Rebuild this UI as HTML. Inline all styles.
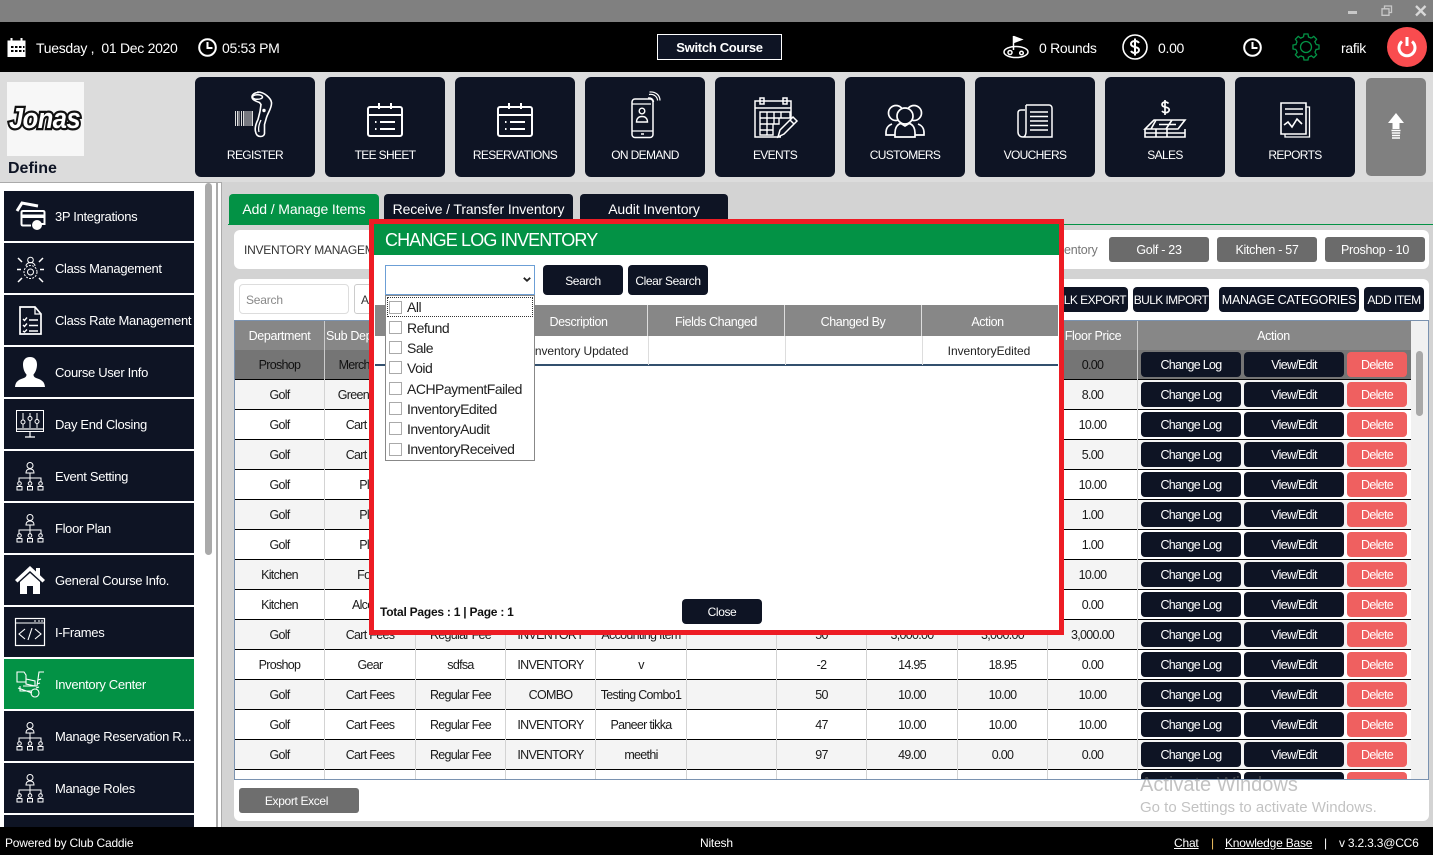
<!DOCTYPE html>
<html><head><meta charset="utf-8">
<style>
*{box-sizing:border-box}
html,body{margin:0;padding:0;width:1433px;height:855px;overflow:hidden;background:#d3d3d3;font-family:"Liberation Sans",sans-serif}
.a{position:absolute}
svg{position:absolute;overflow:visible;fill:none;stroke:#fff}
.t{color:#fff;font-size:14px;letter-spacing:-.3px;white-space:nowrap;position:absolute}
.tile{position:absolute;top:77px;width:120px;height:100px;background:#0e1424;border-radius:6px;color:#fff;font-size:12px;letter-spacing:-.65px;text-align:center;padding-top:71px}
.side{position:absolute;left:4px;width:190px;height:50px;background:#0e1424;color:#fff;font-size:13px;letter-spacing:-.33px;line-height:52px;padding-left:51px;white-space:nowrap}
.btn{position:absolute;background:#0e1424;color:#fff;border-radius:4px;text-align:center;font-size:12px;letter-spacing:-.4px;white-space:nowrap}
.g{position:absolute;top:237px;width:100px;height:25px;line-height:27px;background:#6b6b6b;color:#fff;border-radius:3px;text-align:center;font-size:12.5px;letter-spacing:-.3px}
.r{position:absolute;left:235px;width:1176px;height:30px;border-bottom:1px solid #000;display:flex;font-size:12.5px;letter-spacing:-.7px;color:#1a1a1a;line-height:31px;background:#fff}
.r.o{background:#f4f4f4}
.r span{display:block;height:30px;text-align:center;border-right:1px solid #d3d3d3;white-space:nowrap;overflow:hidden;flex:none}
.w0{width:90px}.w1{width:91px}.wa{width:273px}
.r b{position:absolute;top:2px;height:25px;line-height:27px;background:#0e1424;color:#fff;font-weight:normal;border-radius:4px;text-align:center}
.r b.c{left:906px;width:100px}.r b.v{left:1009px;width:100px}.r b.d{left:1112px;width:60px;background:#ef6060}
.it{position:absolute;left:407px;font-size:14px;letter-spacing:-.5px;color:#222;line-height:18px;white-space:nowrap}
.cb{position:absolute;left:389px;width:13px;height:13px;border:1px solid #aaa;background:#fff}
.mh{position:absolute;top:305px;height:31px;line-height:34px;text-align:center;color:#fff;font-size:12.5px;letter-spacing:-.4px;border-right:1px solid #ddd}
.tab{position:absolute;top:194px;height:31px;background:#0e1424;color:#fff;border-radius:4px 4px 0 0;font-size:14px;letter-spacing:-.12px;text-align:center;line-height:31px;white-space:nowrap}
</style></head>
<body>
<svg width="0" height="0" style="position:absolute"><defs>
<symbol id="org" viewBox="0 0 28 28" overflow="visible"><g fill="none" stroke="#fff" stroke-width="1"><circle cx="14" cy="3.5" r="3"/><path d="M10 11c0-3 1.500-4 4-4s4 1 4 4zM14 11v5M3 20v-4h22v4M14 16v4"/><circle cx="3.500" cy="21.500" r="1.800"/><path d="M1 28v-3.500h5V28zM11.500 28v-3.500h5V28zM22 28v-3.500h5V28z"/><circle cx="14" cy="21.500" r="1.800"/><circle cx="24.500" cy="21.500" r="1.800"/></g></symbol>
<symbol id="cal" viewBox="0 0 36 34" overflow="visible"><g fill="none" stroke="#fff" stroke-width="2"><rect x="1" y="4" width="34" height="29" rx="2"/><path d="M1 12h34M12 0v6M24 0v6M8 19h1.500M13 19h15M8 26h1.500M13 26h15"/></g></symbol>
</defs></svg>

<!-- title bar -->
<div class="a" style="left:0;top:0;width:1433px;height:22px;background:#808080"></div>
<div class="a" style="left:1348px;top:11px;width:9px;height:2.500px;background:#c8c8c8"></div>
<svg style="left:1381px;top:5px" width="12" height="12"><path d="M3.500 3.500V1h7v6.500H8M1 3.800h7v6.500H1z" stroke="#c8c8c8" stroke-width="1.300"/></svg>
<svg style="left:1415px;top:5px" width="12" height="12"><path d="M1 1l9.500 9.500M10.500 1L1 10.500" stroke="#d8d8d8" stroke-width="2.300"/></svg>

<!-- header -->
<div class="a" style="left:0;top:22px;width:1433px;height:50px;background:#000"></div>
<svg style="left:7px;top:37px" width="20" height="20"><path d="M.5 3.500h3V1h2v2.500h8V1h2v2.500h3V20H.5z" fill="#fff" stroke="none"/><path d="M4 9h2.500v2H4zM8 9h2.500v2H8zM12 9h2.500v2H12zM4 13h2.500v2H4zM8 13h2.500v2H8zM12 13h2.500v2H12zM16 9h1.500v2H16zM16 13h1.500v2H16z" fill="#000" stroke="none"/></svg>
<div class="t" style="left:36px;top:40px">Tuesday ,&nbsp; 01 Dec 2020</div>
<svg style="left:198px;top:38px" width="20" height="20"><circle cx="9.500" cy="9.500" r="8.300" stroke-width="2"/><path d="M9.500 4v6h5" stroke-width="2"/></svg>
<div class="t" style="left:222px;top:40px">05:53 PM</div>
<div class="a" style="left:657px;top:34px;width:125px;height:26px;background:#0e1424;border:1px solid #fff;color:#fff;font-weight:bold;font-size:13px;letter-spacing:-.3px;text-align:center;line-height:26px">Switch Course</div>
<svg style="left:1003px;top:35px" width="27" height="24" stroke-width="1.500"><path d="M10.500 1v14M10.500 1.500l8 3-8 3" fill="#fff"/><ellipse cx="13" cy="17" rx="12" ry="5.500"/><circle cx="7" cy="17.500" r="2"/><circle cx="18.500" cy="18" r="1.800"/></svg>
<div class="t" style="left:1039px;top:40px">0 Rounds</div>
<svg style="left:1122px;top:34px" width="26" height="26"><circle cx="13" cy="13" r="12" stroke-width="1.600"/><path d="M17 9c-1-1.500-2.500-2-4-2-2.500 0-4 1.200-4 3s1.500 2.500 4 3 4 1.300 4 3-1.500 3-4 3c-1.800 0-3.200-.7-4-2M13 4.500v17" stroke-width="2"/></svg>
<div class="t" style="left:1158px;top:40px">0.00</div>
<svg style="left:1243px;top:38px" width="20" height="20"><circle cx="9.500" cy="9.500" r="8.300" stroke-width="2"/><path d="M9.500 4v6h5" stroke-width="2"/></svg>
<svg style="left:1306px;top:47px" width="1" height="1" stroke="#039245" stroke-width="1.300"><circle r="5.500" stroke="#039245"/><g stroke="#039245"><path id="gt" d="M-2.500-10L-2-13H2L2.500-10A10.300 10.300 0 0 1 5.300-8.840"/><use href="#gt" transform="rotate(45)"/><use href="#gt" transform="rotate(90)"/><use href="#gt" transform="rotate(135)"/><use href="#gt" transform="rotate(180)"/><use href="#gt" transform="rotate(225)"/><use href="#gt" transform="rotate(270)"/><use href="#gt" transform="rotate(315)"/></g></svg>
<div class="t" style="left:1341px;top:40px">rafik</div>
<div class="a" style="left:1387px;top:27px;width:40px;height:40px;border-radius:50%;background:#f94c4f"></div>
<svg style="left:1397px;top:36px" width="20" height="22" stroke-width="3"><path d="M5 5.500a8 8 0 1 0 10 0M10 1v9"/></svg>

<!-- nav -->
<div class="a" style="left:0;top:72px;width:1433px;height:110px;background:#dcdcdc"></div>
<div class="a" style="left:7px;top:82px;width:77px;height:74px;background:#f7f7f7"></div>
<div class="a" style="left:9px;top:103px;font-size:29px;font-weight:bold;font-style:italic;letter-spacing:-.6px;color:#fff;-webkit-text-stroke:4.5px #111;paint-order:stroke fill;transform:scaleX(.88);transform-origin:left;line-height:32px">Jonas</div>
<div class="a" style="left:8px;top:160px;font-size:16px;font-weight:bold;color:#0e1424;line-height:18px">Define</div>

<div class="tile" style="left:195px">REGISTER</div>
<div class="tile" style="left:325px">TEE SHEET</div>
<div class="tile" style="left:455px">RESERVATIONS</div>
<div class="tile" style="left:585px">ON DEMAND</div>
<div class="tile" style="left:715px">EVENTS</div>
<div class="tile" style="left:845px">CUSTOMERS</div>
<div class="tile" style="left:975px">VOUCHERS</div>
<div class="tile" style="left:1105px">SALES</div>
<div class="tile" style="left:1235px">REPORTS</div>
<div class="a" style="left:1366px;top:78px;width:60px;height:98px;background:#808080;border-radius:5px"></div>
<svg style="left:1388px;top:113px" width="16" height="28"><path d="M8 0l8 10h-4.500v6h-7v-6H0z" fill="#fff" stroke="none"/><path d="M3.500 17.500h9M3.800 20h8.400M4 22.500h8M4 25h8" stroke="#fff" stroke-width="1.500"/></svg>

<!-- register icon -->
<svg style="left:235px;top:92px" width="42" height="46"><path d="M.5 19v15M2.500 19v15M4 19v15M6.500 19v15M8.500 19v15M10 19v15M12 19v15M14 19v15M16 19v15M17.500 19v15" stroke="#ddd" stroke-width="1"/><path d="M23 0.500c-3 0-6 2-6 4.500 0 2.500 3 4 7.500 5.500l1.500 2-1 7-2 8c-2 4-3.500 8-2.500 12 .5 3 2 5 5 5 2.500 0 4-1.500 4-3v-9l2-7c2-6 5.500-10 5-15-.5-4-7-10.500-13.500-10.500z" stroke-width="1.600"/><ellipse cx="22.500" cy="5" rx="5" ry="2.300" stroke-width="1.500"/><circle cx="29" cy="18.500" r="1.200" fill="#fff"/><path d="M26 28c-2 4-3 8-2 12" stroke-width="1.300"/></svg>
<!-- calendars -->
<svg style="left:367px;top:103px" width="36" height="34"><use href="#cal" width="36" height="34"/></svg>
<svg style="left:497px;top:103px" width="36" height="34"><use href="#cal" width="36" height="34"/></svg>
<!-- on demand -->
<svg style="left:631px;top:92px" width="30" height="46"><rect x="1" y="7" width="21" height="38.500" rx="3" stroke-width="1.500"/><path d="M1 39h21M1 12h19" stroke-width="1.200"/><circle cx="11" cy="19" r="2.800" stroke-width="1.400"/><path d="M5.500 30c0-3.500 2-5.500 5.500-5.500s5.500 2 5.500 5.500z" stroke-width="1.400"/><path d="M17 6c3-.5 5.500 1 5.500 4M18 2.500c5-1 8.500 2.500 8.500 6M18.500 0c6-.5 10.500 3 10.500 8.500" stroke-width="1.200"/><path d="M10 42h3" stroke-width="1.500"/></svg>
<!-- events -->
<svg style="left:754px;top:97px" width="44" height="41"><path d="M27 40H1V4h36v18" stroke-width="1.500"/><path d="M1 11h36M6 1h4v6H6zM29 1h4v6h-4z" stroke-width="1.500"/><path d="M6 15h30v6H6zM6 21h19v6H6zM6 27h13v6H6zM6 33h13v5H6zM13 15v23M20 15v12M27 15v6" stroke-width="1.400"/><path d="M24 40l2-7 13-13 4 4-13 13zM36 23l4 4" stroke-width="1.500"/></svg>
<!-- customers -->
<svg style="left:885px;top:104px" width="40" height="34" stroke-width="1.700"><circle cx="11" cy="9" r="7.500"/><circle cx="29" cy="9" r="7.500"/><path d="M7 20c-4 1.500-6 4-6 9v2h9M33 20c4 1.500 6 4 6 9v2h-9"/><circle cx="20" cy="12" r="8" fill="#0e1424"/><path d="M10 33v-4c0-6 3-9 6-9.500l4 2.500 4-2.500c3 .5 6 3.500 6 9.500v4z" fill="#0e1424"/></svg>
<!-- vouchers -->
<svg style="left:1017px;top:104px" width="36" height="34" stroke-width="1.500"><path d="M9 1h23a3 3 0 0 1 3 3v29H6c-3 0-5-2-5-5V9c0-2 1-3 3-3h4M9 1v27c0 3-1.500 5-3 5"/><path d="M13 8h18M13 12.500h18M13 17h18M13 21.500h18M13 26h18" stroke-width="1.500"/></svg>
<!-- sales -->
<svg style="left:1145px;top:100px" width="40" height="38"><path d="M23.500 3.500c-1-1.500-4-2-5.500-.8-1.700 1.300-1 3.500 1 4l3 .8c2.500.8 3 3 1 4.500-2 1.300-5 .5-6-1M20 0v15" stroke-width="1.700"/><path d="M9 20h31l-7 9H0zM11 20l-5 9M27 20l-6 9M14 24.500h17" stroke-width="1.600"/><path d="M0 29v8h40v-8M0 33h40M11 29v8M22 29v8" stroke-width="1.600"/></svg>
<!-- reports -->
<svg style="left:1280px;top:102px" width="31" height="36"><path d="M1 1h25v31H1z" stroke-width="1.600"/><path d="M26 5h3.500v30H5v-3" stroke-width="1.300"/><path d="M5 7h18M5 12h18" stroke-width="1.400"/><path d="M4 23l4-3 4 5 5-8 5 5" stroke-width="1.600"/></svg>

<!-- sidebar -->
<div class="a" style="left:0;top:182px;width:222px;height:645px;background:#fff;border-top:1px solid #aaa"></div>
<div class="a" style="left:216px;top:183px;width:2px;height:644px;background:#aaa"></div>
<div class="a" style="left:221px;top:183px;width:1px;height:644px;background:#aaa"></div>
<div class="a" style="left:205px;top:183px;width:7px;height:372px;background:#aaa;border-radius:4px"></div>
<div class="side" style="top:191px">3P Integrations</div>
<div class="side" style="top:243px">Class Management</div>
<div class="side" style="top:295px">Class Rate Management</div>
<div class="side" style="top:347px">Course User Info</div>
<div class="side" style="top:399px">Day End Closing</div>
<div class="side" style="top:451px">Event Setting</div>
<div class="side" style="top:503px">Floor Plan</div>
<div class="side" style="top:555px">General Course Info.</div>
<div class="side" style="top:607px">I-Frames</div>
<div class="side" style="top:659px;background:#039245">Inventory Center</div>
<div class="side" style="top:711px">Manage Reservation R...</div>
<div class="side" style="top:763px">Manage Roles</div>
<div class="side" style="top:815px;height:12px"></div>

<svg style="left:16px;top:202px" width="29" height="28"><path d="M1 9L6 1l16 3" stroke-width="3"/><path d="M7 9h20c1 0 1.500.7 1.500 1.500V22H25M7 9c-1 0-1.500.7-1.500 1.500V22c0 1 .5 1.500 1.500 1.500h8" stroke-width="2"/><path d="M6 12.500h22v3.500H6z" fill="#fff" stroke="none"/><circle cx="21" cy="23" r="5" fill="#fff" stroke="none"/></svg>
<svg style="left:16px;top:255px" width="29" height="29" stroke-width="1"><circle cx="14.500" cy="5" r="2.800"/><path d="M10 11c0-2 2-3.500 4.500-3.500S19 9 19 11"/><circle cx="14.500" cy="17" r="3"/><circle cx="14.500" cy="17" r="6.500" stroke-dasharray="2 1.200"/><path d="M1 14.500h4M24 14.500h4M2 3l4 4M27 3l-4 4M2 27l4-4M27 27l-4-4" stroke-width="1.500"/></svg>
<svg style="left:19px;top:306px" width="23" height="29"><path d="M1 1h15l6 7v20H1z" stroke-width="1.700"/><path d="M16 1v7h6" stroke-width="1.300"/><path d="M4 13l1.500 1.500L8 11.500M4 19l1.500 1.500L8 17.500M4 25l1.500 1L8 23.500M10 14h9M10 19.500h9M10 25h9" stroke-width="1.400"/></svg>
<svg style="left:15px;top:357px" width="30" height="30"><path d="M15 0c4.500 0 7 3 7 7.500 0 4-1.500 8-3.500 10 0 2 1 3 4 4 4 1.500 7 3 7.500 8.500H0c.5-5.500 3.500-7 7.500-8.500 3-1 4-2 4-4-2-2-3.500-6-3.500-10C8 3 10.500 0 15 0z" fill="#fff" stroke="none"/></svg>
<svg style="left:16px;top:410px" width="28" height="28" stroke-width="1"><rect x=".5" y=".5" width="27" height="21"/><path d="M9 27h10M14 22v5M1 19h26" stroke-width="1.200"/><path d="M7 3v7M7 14v4M14 3v3M14 11v7M21 3v6M21 14v4"/><circle cx="7" cy="12" r="2"/><circle cx="14" cy="8.500" r="2"/><circle cx="21" cy="11.500" r="2"/></svg>
<svg style="left:16px;top:462px" width="28" height="28"><use href="#org" width="28" height="28"/></svg>
<svg style="left:16px;top:514px" width="28" height="28"><use href="#org" width="28" height="28"/></svg>
<svg style="left:15px;top:566px" width="30" height="28"><path d="M15 0L0 14l2.500 2.500L15 5l12.500 11.500L30 14l-5-4.800V2h-4v3.500z" fill="#fff" stroke="none"/><path d="M5 16L15 7l10 9v12h-7v-8h-6v8H5z" fill="#fff" stroke="none"/></svg>
<svg style="left:15px;top:618px" width="30" height="28" stroke-width="1.200"><rect x=".5" y=".5" width="29" height="27"/><path d="M1 5h29M19 3h2M23 3h2M26 3h2" stroke-width="1"/><path d="M10 11l-6 5 6 5M13 22l4-12M20 11l6 5-6 5" stroke-width="1.100"/></svg>
<svg style="left:16px;top:670px" width="29" height="28" stroke-width="1.100"><path d="M1 2h7l2 3v7H1zM10 9l9 2v5l-9-2zM7 16h14l2-14h5M4 16v5h12M22 10l3-1M21 14l3-1M20 18l3-1"/><circle cx="19" cy="23" r="4"/><path d="M2 18l14 5"/></svg>
<svg style="left:16px;top:722px" width="28" height="28"><use href="#org" width="28" height="28"/></svg>
<svg style="left:16px;top:774px" width="28" height="28"><use href="#org" width="28" height="28"/></svg>

<!-- tabs -->
<div class="tab" style="left:229px;width:150px;background:#039245">Add / Manage Items</div>
<div class="tab" style="left:384px;width:189px">Receive / Transfer Inventory</div>
<div class="tab" style="left:580px;width:148px">Audit Inventory</div>
<div class="a" style="left:228px;top:224px;width:1205px;height:1px;background:#039245"></div>

<!-- inventory bar -->
<div class="a" style="left:234px;top:230px;width:1195px;height:39px;background:#fff;border-radius:6px"></div>
<div class="a" style="left:244px;top:243px;font-size:12px;letter-spacing:-.25px;color:#333;white-space:nowrap">INVENTORY MANAGEMENT</div>
<div class="a" style="left:1064px;top:243px;font-size:12.5px;letter-spacing:-.2px;color:#777;white-space:nowrap">entory</div>
<div class="g" style="left:1109px">Golf - 23</div>
<div class="g" style="left:1217px">Kitchen - 57</div>
<div class="g" style="left:1325px">Proshop - 10</div>

<!-- table card -->
<div class="a" style="left:234px;top:279px;width:1195px;height:542px;background:#fff;border-radius:6px"></div>
<div class="a" style="left:239px;top:284px;width:110px;height:30px;border:1px solid #ddd;border-radius:4px;background:#fff;color:#888;font-size:12px;line-height:31px;padding-left:6px;letter-spacing:-.2px">Search</div>
<div class="a" style="left:354px;top:284px;width:100px;height:30px;border:1px solid #ccc;border-radius:3px;background:#fff;color:#333;font-size:12px;line-height:31px;padding-left:6px">All</div>
<div class="btn" style="left:1000px;top:287px;width:128px;height:25px;line-height:26px;text-align:right;padding-right:2px;letter-spacing:-.55px">BULK EXPORT</div>
<div class="btn" style="left:1133px;top:287px;width:76px;height:25px;line-height:26px;letter-spacing:-.6px">BULK IMPORT</div>
<div class="btn" style="left:1219px;top:287px;width:140px;height:25px;line-height:26px;letter-spacing:-.25px;font-size:12.5px">MANAGE CATEGORIES</div>
<div class="btn" style="left:1364px;top:287px;width:60px;height:25px;line-height:26px;letter-spacing:-.5px">ADD ITEM</div>

<div class="a" style="left:234px;top:320px;width:1195px;height:460px;border:1px solid #7a92b0;border-right-color:#7a92b0;background:#fff"></div>
<div class="a" style="left:1411px;top:321px;width:17px;height:458px;background:#f1f1f1"></div>
<div class="a" style="left:1416px;top:351px;width:7px;height:65px;background:#a8a8a8;border-radius:4px"></div>

<div class="a" style="left:235px;top:321px;width:1176px;height:30px;background:#878787;color:#fff;font-size:12.5px;letter-spacing:-.35px;line-height:30px">
<div class="a" style="left:0;top:0;width:90px;height:30px;text-align:center;border-right:1px solid #ccc">Department</div>
<div class="a" style="left:91px;top:0;white-space:nowrap">Sub Dept</div>
<div class="a" style="left:813px;top:0;width:90px;text-align:center">Floor Price</div>
<div class="a" style="left:902px;top:0;width:272px;height:30px;text-align:center;border-left:1px solid #ccc">Action</div>
</div>

<div class="r" style="top:350px;background:#757575;color:#111"><span class="w0" style="border-color:#ccc">Proshop</span><span class="w1" style="border:0">Merchandise</span><span class="w0" style="border:0"></span><span class="w0" style="border:0"></span><span class="w1" style="border:0"></span><span class="w0" style="border:0"></span><span class="w0" style="border:0"></span><span class="w1" style="border:0"></span><span class="w0" style="border:0"></span><span class="w0" style="border-color:#ccc">0.00</span><b class="c">Change Log</b><b class="v">View/Edit</b><b class="d">Delete</b></div>
<div class="r o" style="top:380px"><span class="w0">Golf</span><span class="w1">Greens Fees</span><span class="w0"></span><span class="w0"></span><span class="w1"></span><span class="w0"></span><span class="w0"></span><span class="w1"></span><span class="w0"></span><span class="w0">8.00</span><b class="c">Change Log</b><b class="v">View/Edit</b><b class="d">Delete</b></div>
<div class="r" style="top:410px"><span class="w0">Golf</span><span class="w1">Cart Fees</span><span class="w0"></span><span class="w0"></span><span class="w1"></span><span class="w0"></span><span class="w0"></span><span class="w1"></span><span class="w0"></span><span class="w0">10.00</span><b class="c">Change Log</b><b class="v">View/Edit</b><b class="d">Delete</b></div>
<div class="r o" style="top:440px"><span class="w0">Golf</span><span class="w1">Cart Fees</span><span class="w0"></span><span class="w0"></span><span class="w1"></span><span class="w0"></span><span class="w0"></span><span class="w1"></span><span class="w0"></span><span class="w0">5.00</span><b class="c">Change Log</b><b class="v">View/Edit</b><b class="d">Delete</b></div>
<div class="r" style="top:470px"><span class="w0">Golf</span><span class="w1">Play</span><span class="w0"></span><span class="w0"></span><span class="w1"></span><span class="w0"></span><span class="w0"></span><span class="w1"></span><span class="w0"></span><span class="w0">10.00</span><b class="c">Change Log</b><b class="v">View/Edit</b><b class="d">Delete</b></div>
<div class="r o" style="top:500px"><span class="w0">Golf</span><span class="w1">Play</span><span class="w0"></span><span class="w0"></span><span class="w1"></span><span class="w0"></span><span class="w0"></span><span class="w1"></span><span class="w0"></span><span class="w0">1.00</span><b class="c">Change Log</b><b class="v">View/Edit</b><b class="d">Delete</b></div>
<div class="r" style="top:530px"><span class="w0">Golf</span><span class="w1">Play</span><span class="w0"></span><span class="w0"></span><span class="w1"></span><span class="w0"></span><span class="w0"></span><span class="w1"></span><span class="w0"></span><span class="w0">1.00</span><b class="c">Change Log</b><b class="v">View/Edit</b><b class="d">Delete</b></div>
<div class="r o" style="top:560px"><span class="w0">Kitchen</span><span class="w1">Food</span><span class="w0"></span><span class="w0"></span><span class="w1"></span><span class="w0"></span><span class="w0"></span><span class="w1"></span><span class="w0"></span><span class="w0">10.00</span><b class="c">Change Log</b><b class="v">View/Edit</b><b class="d">Delete</b></div>
<div class="r" style="top:590px"><span class="w0">Kitchen</span><span class="w1">Alcohol</span><span class="w0"></span><span class="w0"></span><span class="w1"></span><span class="w0"></span><span class="w0"></span><span class="w1"></span><span class="w0"></span><span class="w0">0.00</span><b class="c">Change Log</b><b class="v">View/Edit</b><b class="d">Delete</b></div>
<div class="r o" style="top:620px"><span class="w0">Golf</span><span class="w1">Cart Fees</span><span class="w0">Regular Fee</span><span class="w0">INVENTORY</span><span class="w1">Accounting Item</span><span class="w0"></span><span class="w0">50</span><span class="w1">3,000.00</span><span class="w0">3,000.00</span><span class="w0">3,000.00</span><b class="c">Change Log</b><b class="v">View/Edit</b><b class="d">Delete</b></div>
<div class="r" style="top:650px"><span class="w0">Proshop</span><span class="w1">Gear</span><span class="w0">sdfsa</span><span class="w0">INVENTORY</span><span class="w1">v</span><span class="w0"></span><span class="w0">-2</span><span class="w1">14.95</span><span class="w0">18.95</span><span class="w0">0.00</span><b class="c">Change Log</b><b class="v">View/Edit</b><b class="d">Delete</b></div>
<div class="r o" style="top:680px"><span class="w0">Golf</span><span class="w1">Cart Fees</span><span class="w0">Regular Fee</span><span class="w0">COMBO</span><span class="w1">Testing Combo1</span><span class="w0"></span><span class="w0">50</span><span class="w1">10.00</span><span class="w0">10.00</span><span class="w0">10.00</span><b class="c">Change Log</b><b class="v">View/Edit</b><b class="d">Delete</b></div>
<div class="r" style="top:710px"><span class="w0">Golf</span><span class="w1">Cart Fees</span><span class="w0">Regular Fee</span><span class="w0">INVENTORY</span><span class="w1">Paneer tikka</span><span class="w0"></span><span class="w0">47</span><span class="w1">10.00</span><span class="w0">10.00</span><span class="w0">10.00</span><b class="c">Change Log</b><b class="v">View/Edit</b><b class="d">Delete</b></div>
<div class="r o" style="top:740px"><span class="w0">Golf</span><span class="w1">Cart Fees</span><span class="w0">Regular Fee</span><span class="w0">INVENTORY</span><span class="w1">meethi</span><span class="w0"></span><span class="w0">97</span><span class="w1">49.00</span><span class="w0">0.00</span><span class="w0">0.00</span><b class="c">Change Log</b><b class="v">View/Edit</b><b class="d">Delete</b></div>
<div class="r" style="top:770px;height:9px;border:0;overflow:hidden"><span class="w0"></span><span class="w1"></span><span class="w0"></span><span class="w0"></span><span class="w1"></span><span class="w0"></span><span class="w0"></span><span class="w1"></span><span class="w0"></span><span class="w0"></span><b class="c"></b><b class="v"></b><b class="d"></b></div>

<div class="a" style="left:239px;top:788px;width:120px;height:25px;line-height:26px;background:#6e6e6e;color:#fff;border-radius:3px;text-align:center;font-size:12px;letter-spacing:-.35px;padding-right:5px">Export Excel</div>
<div class="a" style="left:1140px;top:773px;font-size:20px;color:rgba(120,120,120,.45);white-space:nowrap;line-height:24px">Activate Windows</div>
<div class="a" style="left:1140px;top:799px;font-size:15px;color:rgba(120,120,120,.45);white-space:nowrap;line-height:18px">Go to Settings to activate Windows.</div>

<!-- footer -->
<div class="a" style="left:0;top:827px;width:1433px;height:28px;background:#000;color:#fff;font-size:12px;letter-spacing:-.2px;line-height:33px;overflow:hidden">
<span class="a" style="left:5px;white-space:nowrap">Powered by Club Caddie</span>
<span class="a" style="left:700px">Nitesh</span>
<span class="a" style="left:1174px;text-decoration:underline">Chat</span>
<span class="a" style="left:1211px;color:#f0c060">|</span>
<span class="a" style="left:1225px;text-decoration:underline;white-space:nowrap">Knowledge Base</span>
<span class="a" style="left:1324px">|</span>
<span class="a" style="left:1339px;white-space:nowrap">v 3.2.3.3@CC6</span>
</div>

<!-- modal -->
<div class="a" style="left:369px;top:219px;width:695px;height:416px;border:5px solid #ed1c24;background:#fff"></div>
<div class="a" style="left:374px;top:224px;width:685px;height:31px;background:#039245;color:#fff;font-size:18px;letter-spacing:-.85px;line-height:33px;padding-left:11px;white-space:nowrap">CHANGE LOG INVENTORY</div>
<div class="a" style="left:385px;top:265px;width:150px;height:30px;border:1px solid #6c9fd6;background:#fff"></div>
<svg style="left:523px;top:277px" width="8" height="5"><path d="M.8.8L4 3.800 7.200.8" stroke="#222" stroke-width="1.800"/></svg>
<div class="btn" style="left:543px;top:265px;width:80px;height:30px;line-height:33px">Search</div>
<div class="btn" style="left:628px;top:265px;width:80px;height:30px;line-height:33px">Clear Search</div>

<div class="a" style="left:375px;top:305px;width:683px;height:31px;background:#878787"></div>
<div class="mh" style="left:510px;width:138px">Description</div>
<div class="mh" style="left:648px;width:137px">Fields Changed</div>
<div class="mh" style="left:785px;width:137px">Changed By</div>
<div class="mh" style="left:922px;width:131px;border:0">Action</div>
<div class="a" style="left:375px;top:336px;width:683px;height:30px;border-bottom:2px solid #33506e"></div>
<div class="a" style="left:648px;top:336px;width:1px;height:29px;background:#ddd"></div>
<div class="a" style="left:785px;top:336px;width:1px;height:29px;background:#ddd"></div>
<div class="a" style="left:922px;top:336px;width:1px;height:29px;background:#ddd"></div>
<div class="a" style="left:511px;top:344px;width:138px;text-align:center;font-size:12px;letter-spacing:-.08px;color:#222;white-space:nowrap">Inventory Updated</div>
<div class="a" style="left:921px;top:344px;width:136px;text-align:center;font-size:12px;letter-spacing:-.05px;color:#222">InventoryEdited</div>

<div class="a" style="left:385px;top:295px;width:150px;height:166px;background:#fff;border:1.500px solid #888"></div>
<div class="a" style="left:387px;top:297px;width:146px;height:20px;border:1px dotted #333"></div>
<div class="cb" style="top:301px"></div><div class="it" style="top:298px">All</div>
<div class="cb" style="top:321px"></div><div class="it" style="top:319px">Refund</div>
<div class="cb" style="top:341px"></div><div class="it" style="top:339px">Sale</div>
<div class="cb" style="top:361px"></div><div class="it" style="top:359px">Void</div>
<div class="cb" style="top:382px"></div><div class="it" style="top:380px">ACHPaymentFailed</div>
<div class="cb" style="top:402px"></div><div class="it" style="top:400px">InventoryEdited</div>
<div class="cb" style="top:422px"></div><div class="it" style="top:420px">InventoryAudit</div>
<div class="cb" style="top:443px"></div><div class="it" style="top:440px">InventoryReceived</div>

<div class="a" style="left:380px;top:605px;font-size:12px;font-weight:bold;letter-spacing:-.24px;color:#111;white-space:nowrap">Total Pages : 1 | Page : 1</div>
<div class="btn" style="left:682px;top:599px;width:80px;height:25px;line-height:26px">Close</div>
</body></html>
